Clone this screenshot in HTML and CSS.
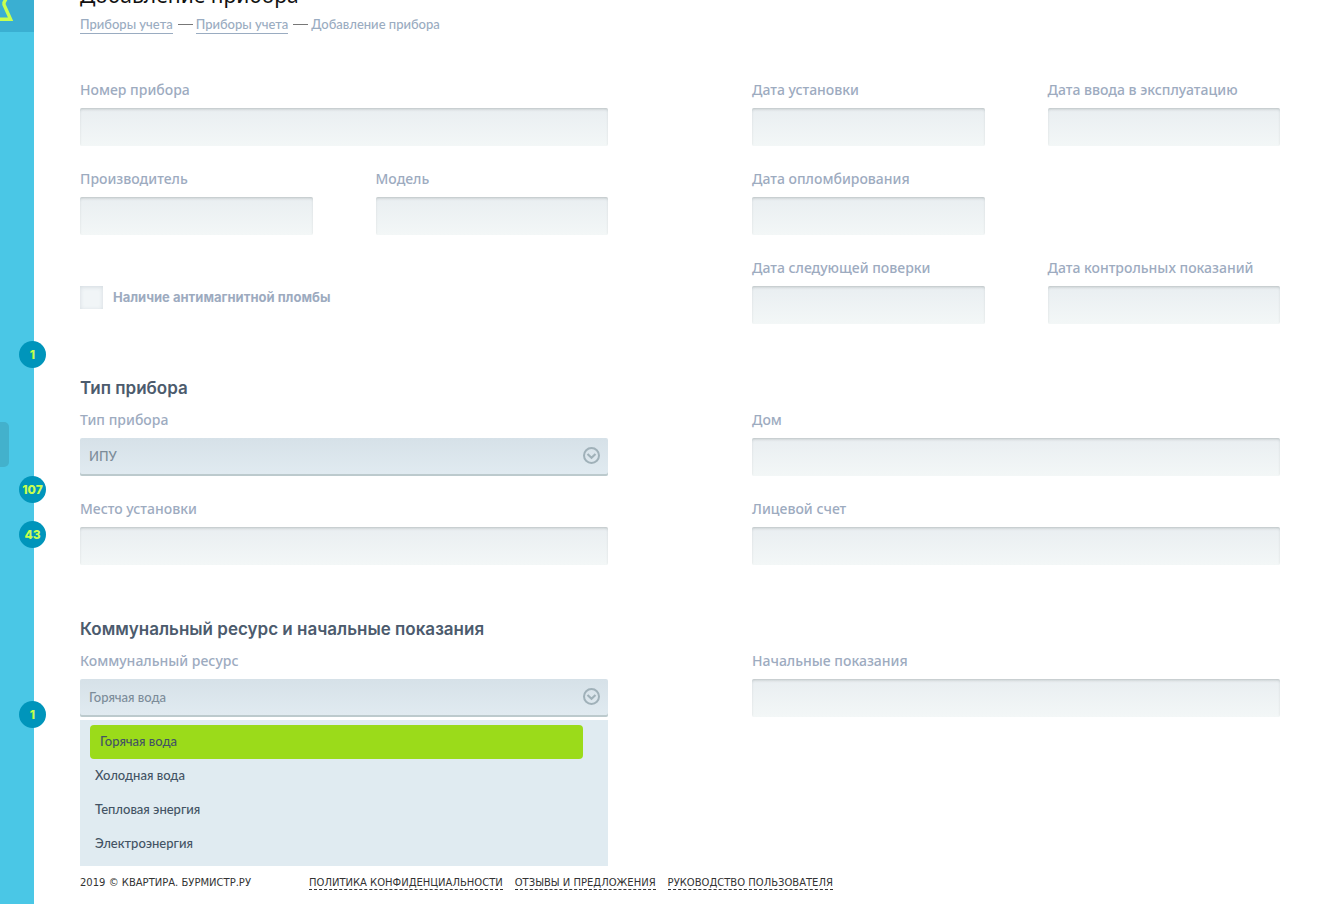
FILE: index.html
```html
<!DOCTYPE html>
<html lang="ru">
<head>
<meta charset="utf-8">
<title>Добавление прибора</title>
<link rel="stylesheet" href="styles.css">
</head>
<body>
<div class="page">
  <aside class="sidebar">
    <a class="logo" href="#" aria-label="Квартира. Бурмистр.ру">
      <svg width="34" height="32" viewBox="0 0 34 32" fill="none" stroke="#c8ff50" stroke-width="3.4" aria-hidden="true"><path d="M-1 19.2H10.6L4 4.6V2.6L6.5-2"/></svg>
    </a>
    <ul class="nav">
      <li class="nav-item"></li>
      <li class="nav-item"></li>
      <li class="nav-item"></li>
      <li class="nav-item"></li>
      <li class="nav-item"></li>
      <li class="nav-item"></li>
      <li class="nav-item"><a class="badge" href="#">1</a></li>
      <li class="nav-item"></li>
      <li class="nav-item nav-item-active"></li>
      <li class="nav-item"><a class="badge" href="#">107</a></li>
      <li class="nav-item"><a class="badge" href="#">43</a></li>
      <li class="nav-item"></li>
      <li class="nav-item"></li>
      <li class="nav-item"></li>
      <li class="nav-item"><a class="badge" href="#">1</a></li>
    </ul>
  </aside>
  <main class="content">
    <h1 class="title">Добавление прибора</h1>
    <nav class="crumbs"><a href="#">Приборы учета</a><i class="dash"></i><a href="#">Приборы учета</a><i class="dash"></i><span>Добавление прибора</span></nav>
    <form class="form">
      <section class="columns">
        <div class="fields pair">
          <div class="field wide"><label for="number">Номер прибора</label><input class="control" id="number" type="text"></div>
          <div class="field"><label for="maker">Производитель</label><input class="control" id="maker" type="text"></div>
          <div class="field"><label for="model">Модель</label><input class="control" id="model" type="text"></div>
          <div class="check wide"><input class="box" id="seal" type="checkbox"><label for="seal">Наличие антимагнитной пломбы</label></div>
        </div>
        <div class="fields pair">
          <div class="field"><label for="d1">Дата установки</label><input class="control" id="d1" type="text"></div>
          <div class="field"><label for="d2">Дата ввода в эксплуатацию</label><input class="control" id="d2" type="text"></div>
          <div class="field first"><label for="d3">Дата опломбирования</label><input class="control" id="d3" type="text"></div>
          <div class="field first"><label for="d4">Дата следующей поверки</label><input class="control" id="d4" type="text"></div>
          <div class="field"><label for="d5">Дата контрольных показаний</label><input class="control" id="d5" type="text"></div>
        </div>
      </section>
      <section>
        <h2 class="section-title">Тип прибора</h2>
        <div class="columns">
          <div class="fields">
            <div class="field"><label for="type">Тип прибора</label>
              <div class="select"><select class="control" id="type"><option>ИПУ</option></select>
                <svg class="arrow" width="18" height="18" viewBox="0 0 18 18" fill="none" stroke="#a0b1b9" stroke-width="2" aria-hidden="true"><circle cx="9.5" cy="8.5" r="7.5"/><path d="M5.5 7l4 3.7 4-3.7" stroke-width="2.2"/></svg></div>
            </div>
            <div class="field"><label for="place">Место установки</label><input class="control" id="place" type="text"></div>
          </div>
          <div class="fields">
            <div class="field"><label for="house">Дом</label><input class="control" id="house" type="text"></div>
            <div class="field"><label for="account">Лицевой счет</label><input class="control" id="account" type="text"></div>
          </div>
        </div>
      </section>
      <section>
        <h2 class="section-title">Коммунальный ресурс и начальные показания</h2>
        <div class="columns">
          <div class="field"><label for="resource">Коммунальный ресурс</label>
            <div class="select"><select class="control" id="resource"><option>Горячая вода</option><option>Холодная вода</option><option>Тепловая энергия</option><option>Электроэнергия</option></select>
              <svg class="arrow" width="18" height="18" viewBox="0 0 18 18" fill="none" stroke="#a0b1b9" stroke-width="2" aria-hidden="true"><circle cx="9.5" cy="8.5" r="7.5"/><path d="M5.5 7l4 3.7 4-3.7" stroke-width="2.2"/></svg>
              <div class="menu" role="listbox" aria-label="Коммунальный ресурс">
                <button class="option selected" type="button" role="option" aria-selected="true">Горячая вода</button>
                <button class="option" type="button" role="option">Холодная вода</button>
                <button class="option" type="button" role="option">Тепловая энергия</button>
                <button class="option" type="button" role="option">Электроэнергия</button>
              </div>
            </div>
          </div>
          <div class="field"><label for="initial">Начальные показания</label><input class="control" id="initial" type="text"></div>
        </div>
      </section>
    </form>
    <footer class="footer">
      <span class="copyright">2019 © КВАРТИРА. БУРМИСТР.РУ</span>
      <a href="#">ПОЛИТИКА КОНФИДЕНЦИАЛЬНОСТИ</a>
      <a href="#">ОТЗЫВЫ И ПРЕДЛОЖЕНИЯ</a>
      <a href="#">РУКОВОДСТВО ПОЛЬЗОВАТЕЛЯ</a>
    </footer>
  </main>
</div>
</body>
</html>
```

FILE: styles.css
```css
* { box-sizing: border-box; }
body { margin: 0; background: #fff; color: #435364; font-family: "Noto Sans", sans-serif; font-size: 13px; }
.page { display: flex; min-height: 100vh; }

.sidebar { flex: none; width: 34px; background: #4ac7e6; }
.logo { display: block; height: 32px; background: #3aafd2; }
.logo svg { display: block; }
.nav { margin: 0; padding: 30px 0 0; list-style: none; }
.nav-item { display: flex; align-items: center; height: 45px; }
.nav-item-active { width: 9px; background: #43b1cc; border-radius: 0 5px 5px 0; }
.badge { flex: none; width: 27px; height: 27px; margin-left: 19px; border-radius: 50%; background: #0095bb; color: #c8ff50; font: 800 12px/27px Inter, sans-serif; text-align: center; text-decoration: none; }

.content { flex: 1; min-width: 0; padding: 0 40px 0 46px; }
.title { margin: -19px 0 5px; color: #111; font-size: 21px; font-weight: 400; line-height: 28px; }
.crumbs { display: flex; align-items: center; height: 20px; color: #9aacc1; font: 500 13px/18px Lato, sans-serif; }
.crumbs a { color: inherit; text-decoration: none; border-bottom: 1px solid #9aacc1; }
.dash { width: 15px; height: 1px; margin: 0 3px 0 5px; background: #777; }

.form { display: flex; flex-direction: column; gap: 52px; padding-top: 46px; }
.columns { display: grid; grid-template-columns: 1fr 1fr; gap: 12%; }
.fields { display: grid; gap: 23px 63px; align-content: start; }
.pair { grid-template-columns: 1fr 1fr; }
.wide { grid-column: 1 / -1; }
.first { grid-column: 1; }
.field { display: flex; flex-direction: column; gap: 8px; min-width: 0; }
.field label { color: #9dabbf; font-size: 14px; font-weight: 500; line-height: 20px; }
.control { display: block; width: 100%; height: 38px; padding: 0 10px; border: 0; border-radius: 2px; outline: 0; background: linear-gradient(#e9eef1, #f3f7f7); box-shadow: inset 0 2px 3px -1px rgba(90, 100, 100, .35); color: #7c8c99; font: 500 13px Lato, sans-serif; }
.select { position: relative; }
.select .control { padding: 0 34px 2px 9px; appearance: none; background: linear-gradient(#d6e1e8, #e1ebf1); box-shadow: inset 0 -2px #bccacd; }
.arrow { position: absolute; top: 9px; right: 8px; pointer-events: none; }
.menu { position: absolute; top: 41px; left: 0; right: 0; z-index: 1; padding: 5px 25px 5px 10px; background: #e0ebf1; }
.option { display: block; width: 100%; height: 34px; padding: 0 5px 2px; border: 0; border-radius: 4px; background: none; color: #435364; font: 500 13px Lato, sans-serif; text-align: left; }
.option.selected { padding: 0 10px 2px; background: #9bdb1a; }
.check { display: flex; align-items: flex-start; gap: 10px; margin-top: 28px; }
.box { width: 23px; height: 23px; margin: 0; appearance: none; background: #f1f5f7; box-shadow: inset 0 1px 4px rgba(90, 110, 130, .2); }
.check label { color: #9dabbf; font: 700 13px/22px Inter, sans-serif; }
.section-title { margin: 0 0 10px; color: #4c5b6d; font: 600 17px/24px Inter, sans-serif; }

.footer { display: flex; flex-wrap: wrap; gap: 4px 12px; padding: 159px 0 14px; color: #333; font: 10px/13px "DejaVu Sans", sans-serif; }
.copyright { margin-right: 46px; }
.footer a { color: inherit; text-decoration: none; border-bottom: 1px dashed #333; }
```
